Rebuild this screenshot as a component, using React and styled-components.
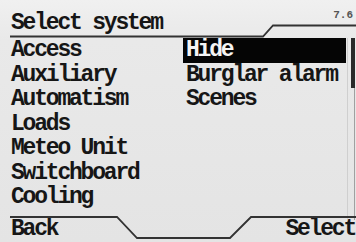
import React from "react";
import styled, { createGlobalStyle } from "styled-components";

// Menu screen of a small monochrome panel display
const GlobalStyle = createGlobalStyle`
  html, body {
    margin: 0;
    padding: 0;
    background: #e6e6e6;
  }
`;

const Screen = styled.div`
  width: 356px;
  height: 242px;
  overflow: hidden;
  display: flex;
  flex-direction: column;
  background: linear-gradient(#f0f0f0 0px, #e9e9e9 40px, #e4e4e4 242px);
  color: #161616;
  font-family: "Liberation Mono", "DejaVu Sans Mono", monospace;
  font-weight: bold;
  font-size: 23px;
  letter-spacing: -2.2px;
`;

const Header = styled.div`
  position: relative;
  height: 38px;
  flex: none;
  display: flex;
  align-items: flex-end;
  justify-content: space-between;
  padding: 0 3px 0 11px;
  box-sizing: border-box;
`;

const Title = styled.div`
  line-height: 24px;
  margin-bottom: 3px;
`;

const Version = styled.div`
  align-self: flex-start;
  margin-top: 9px;
  font-size: 11px;
  letter-spacing: 0;
  color: #555;
`;

const FrameLine = styled.svg`
  position: absolute;
  left: 0;
  top: 0;
  pointer-events: none;
`;

const Body = styled.div`
  flex: 1;
  display: grid;
  grid-template-columns: 183px 163px 10px;
  min-height: 0;
`;

const List = styled.div`
  display: flex;
  flex-direction: column;
  padding-left: ${(p) => p.$inset || 0}px;
`;

const Row = styled.div`
  height: 24.5px;
  line-height: 25px;
  white-space: pre;
  padding-left: ${(p) => (p.$boxed ? 3 : 0)}px;
  background: ${(p) => (p.$selected ? "#050505" : "transparent")};
  color: ${(p) => (p.$selected ? "#f4f4f4" : "inherit")};
`;

const ScrollTrack = styled.div`
  display: flex;
  justify-content: flex-end;
  padding-right: 1px;
  border-left: 1px solid #cfcfcf;
  margin-left: 1px;
`;

const Track = styled.div`
  width: 4px;
  height: 182px;
  display: flex;
  flex-direction: column;
  border-right: 1px solid #a0a0a0;
  box-sizing: border-box;
`;

const Thumb = styled.div`
  width: 4px;
  height: 50px;
  background: #2a2a2a;
`;

const Footer = styled.div`
  position: relative;
  height: 26px;
  flex: none;
  display: flex;
  justify-content: space-between;
  align-items: flex-end;
  padding: 0 1px 0 11px;
`;

const SoftKey = styled.div`
  line-height: 22px;
  margin-bottom: 2px;
`;

const systems = [
  "Access",
  "Auxiliary",
  "Automatism",
  "Loads",
  "Meteo Unit",
  "Switchboard",
  "Cooling",
];

const subItems = ["Hide", "Burglar alarm", "Scenes"];

export default function App() {
  return (
    <>
      <GlobalStyle />
      <Screen>
        <Header>
          <Title>Select system</Title>
          <Version>7.6</Version>
          <FrameLine width="356" height="38">
            <path
              d="M10 36.5 H263 L273 25.5 H356"
              fill="none"
              stroke="#333"
              strokeWidth="1.8"
            />
          </FrameLine>
        </Header>
        <Body>
          <List $inset={11}>
            {systems.map((s) => (
              <Row key={s}>{s}</Row>
            ))}
          </List>
          <List>
            {subItems.map((s, i) => (
              <Row key={s} $boxed $selected={i === 0}>
                {s}
              </Row>
            ))}
          </List>
          <ScrollTrack>
            <Track>
              <Thumb />
            </Track>
          </ScrollTrack>
        </Body>
        <Footer>
          <FrameLine width="356" height="26">
            <path
              d="M10 1 H117 L137 22 H230 L251 1 H356"
              fill="none"
              stroke="#333"
              strokeWidth="1.8"
            />
          </FrameLine>
          <SoftKey>Back</SoftKey>
          <SoftKey>Select</SoftKey>
        </Footer>
      </Screen>
    </>
  );
}
